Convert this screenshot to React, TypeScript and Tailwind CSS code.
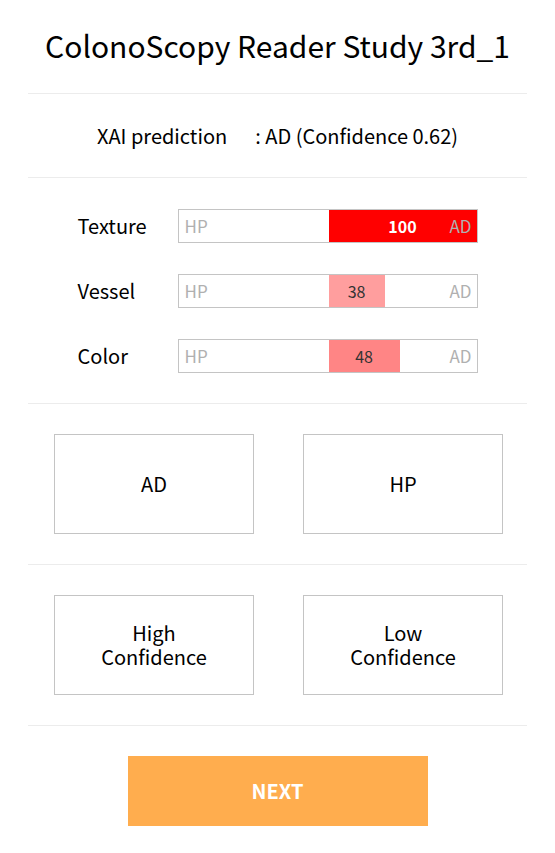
import React from "react";

const bars = [
  { label: "Texture", value: 100 },
  { label: "Vessel", value: 38 },
  { label: "Color", value: 48 },
];

function Bar({ label, value }: { label: string; value: number }) {
  const strong = value >= 100;
  return (
    <div className="flex items-center w-[400px]">
      <div className="w-[100px] text-[20px] text-black leading-none">{label}</div>
      <div className="relative w-[300px] h-[34px] border border-[#c4c4c4] bg-white">
        <div
          className="absolute top-0 bottom-0 left-[150px] flex items-center justify-center"
          style={{ width: `${(value / 100) * 148}px`, backgroundColor: `rgba(255,0,0,${value / 100})` }}
        >
          <span className={strong ? "text-white font-bold text-[16px]" : "text-[#333] text-[16px]"}>
            {value}
          </span>
        </div>
        <span className="absolute left-[6px] top-0 bottom-0 flex items-center text-[17px] text-[#b0b0b0]">HP</span>
        <span className="absolute right-[5px] top-0 bottom-0 flex items-center text-[17px] text-[#b0b0b0]">AD</span>
      </div>
    </div>
  );
}

function Choice({ children }: { children: React.ReactNode }) {
  return (
    <button className="w-[200px] h-[100px] border border-[#c4c4c4] bg-white flex items-center justify-center text-center text-[20px] leading-[24px] text-black">
      {children}
    </button>
  );
}

export default function App() {
  return (
    <div
      className="w-[555px] h-[853px] bg-white flex justify-center"
      style={{ fontFamily: '"Noto Sans CJK KR", "Noto Sans", sans-serif' }}
    >
      <div className="w-[499px] flex flex-col">
        <div className="h-[93px] flex items-center justify-center text-[30px] text-black pb-[2px]">
          ColonoScopy Reader Study 3rd_1
        </div>
        <div className="h-px bg-[#ececec]" />
        <div className="h-[83px] flex items-center justify-center text-[20px] text-black">
          <span>XAI prediction</span>
          <span className="ml-[28px]">: AD (Confidence 0.62)</span>
        </div>
        <div className="h-px bg-[#ececec]" />
        <div className="h-[225px] flex flex-col items-center justify-center gap-[31px]">
          {bars.map((b) => (
            <Bar key={b.label} label={b.label} value={b.value} />
          ))}
        </div>
        <div className="h-px bg-[#ececec]" />
        <div className="h-[160px] flex items-center justify-center gap-[49px] pl-[2px]">
          <Choice>AD</Choice>
          <Choice>HP</Choice>
        </div>
        <div className="h-px bg-[#ececec]" />
        <div className="h-[160px] flex items-center justify-center gap-[49px] pl-[2px]">
          <Choice>
            High
            <br />
            Confidence
          </Choice>
          <Choice>
            Low
            <br />
            Confidence
          </Choice>
        </div>
        <div className="h-px bg-[#ececec]" />
        <div className="pt-[30px] flex justify-center">
          <button className="w-[300px] h-[70px] bg-[#ffad4e] text-white font-bold text-[20px] flex items-center justify-center">
            NEXT
          </button>
        </div>
      </div>
    </div>
  );
}
